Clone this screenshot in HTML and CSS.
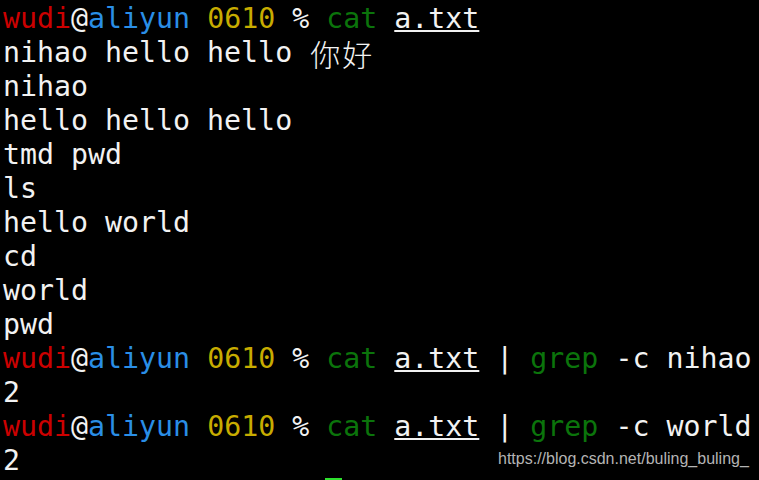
FILE: index.html
```html
<!DOCTYPE html>
<html>
<head>
<meta charset="utf-8">
<link rel="stylesheet" href="styles.css">
</head>
<body>
<div class="term">
<div class="line"><span class="r">wudi</span>@<span class="b">aliyun</span> <span class="y">0610</span> % <span class="g">cat</span> <span class="u">a.txt</span></div>
<div class="line">nihao hello hello <span class="cjk">你</span><span class="cjk">好</span></div>
<div class="line">nihao</div>
<div class="line">hello hello hello</div>
<div class="line">tmd pwd</div>
<div class="line">ls</div>
<div class="line">hello world</div>
<div class="line">cd</div>
<div class="line">world</div>
<div class="line">pwd</div>
<div class="line"><span class="r">wudi</span>@<span class="b">aliyun</span> <span class="y">0610</span> % <span class="g">cat</span> <span class="u">a.txt</span> | <span class="g">grep</span> -c nihao</div>
<div class="line">2</div>
<div class="line"><span class="r">wudi</span>@<span class="b">aliyun</span> <span class="y">0610</span> % <span class="g">cat</span> <span class="u">a.txt</span> | <span class="g">grep</span> -c world</div>
<div class="line">2</div>
</div>
<div class="cursor"></div>
<div class="watermark">https://blog.csdn.net/buling_buling_</div>
</body>
</html>
```
FILE: styles.css
```css
html, body {
  margin: 0;
  padding: 0;
  background: #000;
  width: 759px;
  height: 480px;
  overflow: hidden;
  position: relative;
}
.term {
  padding: 2px 0 0 3px;
  font-family: "DejaVu Sans Mono", monospace;
  font-size: 28.25px;
  line-height: 34px;
  color: #f2f2f2;
}
.line {
  height: 34px;
  white-space: pre;
}
.r { color: #cc0000; }
.b { color: #2a8ee6; }
.y { color: #c8ac00; }
.g { color: #0b740b; }
.u {
  text-decoration: underline;
  text-decoration-thickness: 2px;
  text-underline-offset: 2px;
}
.cjk {
  display: inline-block;
  width: 2ch;
  text-align: center;
  font-family: "Noto Sans CJK SC", sans-serif;
  font-weight: 300;
  font-size: 30px;
  line-height: 34px;
  vertical-align: top;
}
.cursor {
  position: absolute;
  left: 325px;
  top: 478px;
  width: 17px;
  height: 2px;
  background: #2ee02e;
}
.watermark {
  position: absolute;
  left: 498px;
  top: 450px;
  font-family: "Liberation Sans", Arial, sans-serif;
  font-size: 16px;
  color: #b4b4b4;
  white-space: nowrap;
}
```
